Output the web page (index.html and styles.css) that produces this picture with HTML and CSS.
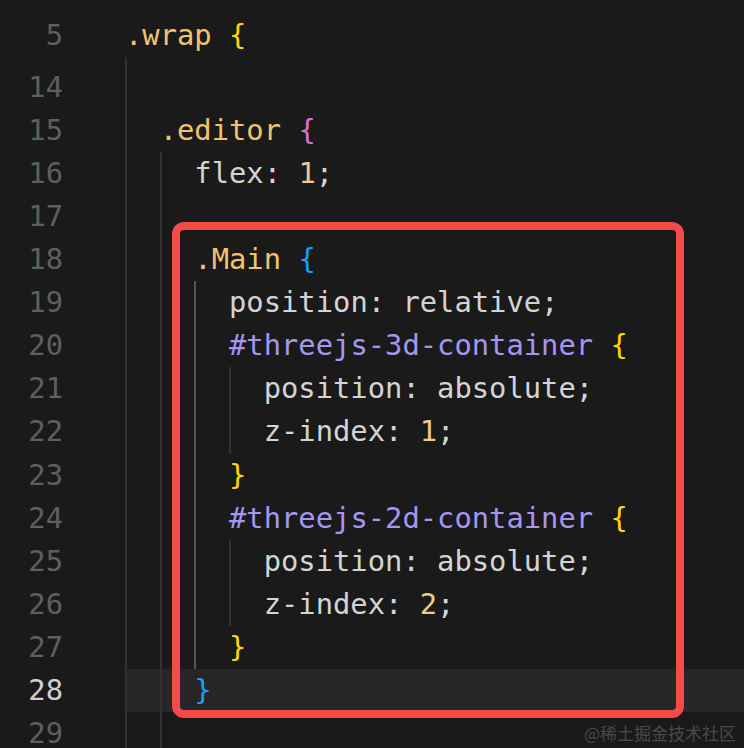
FILE: index.html
```html
<!DOCTYPE html>
<html lang="zh">
<head>
<meta charset="utf-8">
<title>editor</title>
<link rel="stylesheet" href="styles.css">
</head>
<body>
<div class="editor">
  <div class="row sticky"><span class="ln">5</span><span class="code"><span class="t"><span class="sel">.wrap</span> <span class="b1">{</span></span></span></div>
  <div class="row partial"><span class="ln"></span><span class="code"><span class="ind"></span></span></div>
  <div class="row"><span class="ln">14</span><span class="code"><span class="ind"></span></span></div>
  <div class="row"><span class="ln">15</span><span class="code"><span class="ind"></span><span class="t"><span class="sel">.editor</span> <span class="b2">{</span></span></span></div>
  <div class="row"><span class="ln">16</span><span class="code"><span class="ind"></span><span class="ind"></span><span class="t">flex: <span class="num">1</span>;</span></span></div>
  <div class="row"><span class="ln">17</span><span class="code"><span class="ind"></span><span class="ind"></span></span></div>
  <div class="row"><span class="ln">18</span><span class="code"><span class="ind"></span><span class="ind"></span><span class="t"><span class="sel">.Main</span> <span class="b3">{</span></span></span></div>
  <div class="row"><span class="ln">19</span><span class="code"><span class="ind"></span><span class="ind"></span><span class="ind active"></span><span class="t">position: relative;</span></span></div>
  <div class="row"><span class="ln">20</span><span class="code"><span class="ind"></span><span class="ind"></span><span class="ind active"></span><span class="t"><span class="id">#threejs-3d-container</span> <span class="b1">{</span></span></span></div>
  <div class="row"><span class="ln">21</span><span class="code"><span class="ind"></span><span class="ind"></span><span class="ind active"></span><span class="ind"></span><span class="t">position: absolute;</span></span></div>
  <div class="row"><span class="ln">22</span><span class="code"><span class="ind"></span><span class="ind"></span><span class="ind active"></span><span class="ind"></span><span class="t">z-index: <span class="num">1</span>;</span></span></div>
  <div class="row"><span class="ln">23</span><span class="code"><span class="ind"></span><span class="ind"></span><span class="ind active"></span><span class="t"><span class="b1">}</span></span></span></div>
  <div class="row"><span class="ln">24</span><span class="code"><span class="ind"></span><span class="ind"></span><span class="ind active"></span><span class="t"><span class="id">#threejs-2d-container</span> <span class="b1">{</span></span></span></div>
  <div class="row"><span class="ln">25</span><span class="code"><span class="ind"></span><span class="ind"></span><span class="ind active"></span><span class="ind"></span><span class="t">position: absolute;</span></span></div>
  <div class="row"><span class="ln">26</span><span class="code"><span class="ind"></span><span class="ind"></span><span class="ind active"></span><span class="ind"></span><span class="t">z-index: <span class="num">2</span>;</span></span></div>
  <div class="row"><span class="ln">27</span><span class="code"><span class="ind"></span><span class="ind"></span><span class="ind active"></span><span class="t"><span class="b1">}</span></span></span></div>
  <div class="row current"><span class="ln">28</span><span class="code"><span class="ind"></span><span class="ind"></span><span class="t"><span class="b3">}</span></span></span></div>
  <div class="row"><span class="ln">29</span><span class="code"><span class="ind"></span><span class="ind"></span></span></div>
  <div class="highlight-box"></div>
  <div class="watermark">@稀土掘金技术社区</div>
</div>
</body>
</html>
```

FILE: styles.css
```css
html, body {
  margin: 0;
  padding: 0;
  background: #1a1a1a;
}

.editor {
  position: relative;
  width: 744px;
  height: 748px;
  overflow: hidden;
  background: #1a1a1a;
  padding-top: 14px;
  box-sizing: border-box;
  font-family: "DejaVu Sans Mono", "Liberation Mono", monospace;
  font-size: 28.8px;
  color: #d4d4d4;
}

.row {
  display: flex;
  height: 43.1px;
  line-height: 43.1px;
  white-space: pre;
}

.row.partial {
  height: 8.6px;
}

.ln {
  width: 63px;
  flex: none;
  text-align: right;
  color: #5f5f5f;
  margin-right: 62px;
}

.code {
  flex: 1;
  display: flex;
  align-items: stretch;
}

.t {
  white-space: pre;
  color: #d4d4d4;
}

.row.current .code {
  background: #262626;
}

.row.current .ln {
  color: #d0d0d0;
}

.ind {
  width: 34.68px;
  flex: none;
  background: linear-gradient(#313131, #313131) no-repeat 0 0 / 2px 100%;
}

.ind.active {
  background-image: linear-gradient(#555555, #555555);
}

.sel { color: #f2c36e; }
.num { color: #f1c98a; }
.id  { color: #a497f3; }
.b1  { color: #ffd700; }
.b2  { color: #da70d6; }
.b3  { color: #179fff; }

.highlight-box {
  position: absolute;
  left: 172px;
  top: 222px;
  width: 512px;
  height: 496px;
  box-sizing: border-box;
  border: 8px solid #f44b4a;
  border-radius: 12px;
}

.watermark {
  position: absolute;
  right: 8px;
  bottom: 3px;
  font-family: "Noto Sans CJK SC", "Noto Sans", sans-serif;
  font-size: 17px;
  line-height: 24px;
  color: #4a4a4a;
}
```
